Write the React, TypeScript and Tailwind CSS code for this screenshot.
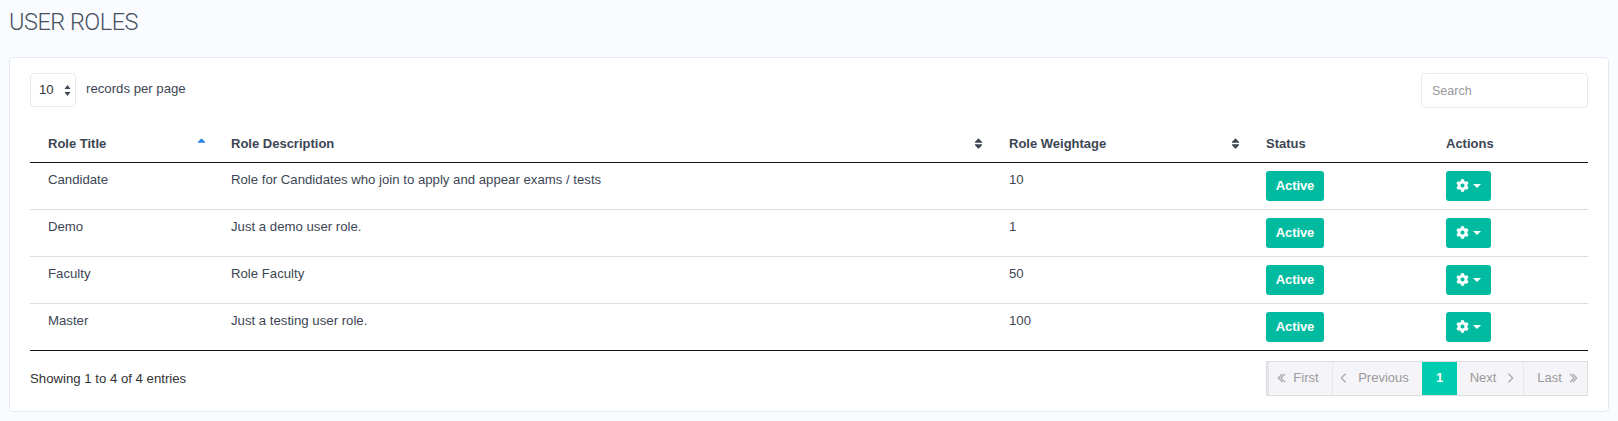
import { FaCog, FaSort, FaSortUp } from "react-icons/fa";
import { LiaAngleDoubleLeftSolid, LiaAngleDoubleRightSolid, LiaAngleLeftSolid, LiaAngleRightSolid } from "react-icons/lia";

const roles = [
    { title: "Candidate", description: "Role for Candidates who join to apply and appear exams / tests", weightage: "10" },
    { title: "Demo", description: "Just a demo user role.", weightage: "1" },
    { title: "Faculty", description: "Role Faculty", weightage: "50" },
    { title: "Master", description: "Just a testing user role.", weightage: "100" },
];

function Pager() {
    return (
        <div className="flex h-[35px] border border-[#dddddd] bg-[#f5f5f9] text-[13px] text-[#999999]">
            <span className="flex w-[66px] items-center justify-center gap-[5px] border-r border-l-2 border-r-[#e8e8ec] border-l-[#e4e4e8] pr-[6px]">
                <LiaAngleDoubleLeftSolid className="text-[12px]" strokeWidth={1} /> First
            </span>
            <span className="flex w-[89px] items-center justify-center gap-[8px] pr-[8px]">
                <LiaAngleLeftSolid className="text-[12px]" strokeWidth={1} /> Previous
            </span>
            <span className="flex w-[35px] items-center justify-center bg-[#00ccb0] font-bold text-white">1</span>
            <span className="flex w-[67px] items-center justify-center gap-[8px] border-r border-[#e8e8ec] pl-[6px]">
                Next <LiaAngleRightSolid className="text-[12px]" strokeWidth={1} />
            </span>
            <span className="flex w-[63px] items-center justify-center gap-[5px] pl-[5px]">
                Last <LiaAngleDoubleRightSolid className="text-[12px]" strokeWidth={1} />
            </span>
        </div>
    );
}

export default function App() {
    return (
        <div className="h-[421px] overflow-hidden bg-[#f9fbfe] px-[9px] pt-[9px] font-['Liberation_Sans',sans-serif] text-[13.2px] text-[#3d4654]">
            <h1 className="h-[48px] font-['Roboto',sans-serif] text-[23.5px] leading-[26px] font-light tracking-[-0.5px] text-[#47505e]">
                USER ROLES
            </h1>

            <div className="h-[355px] w-[1600px] rounded-[4px] border border-[#e3e9f3] bg-white px-[20px] pt-[15px]">
                <div className="flex items-start justify-between">
                    <div className="flex items-start">
                        <div className="relative h-[34px] w-[46px]">
                            <select className="h-full w-full appearance-none rounded-[4px] border border-[#e3e9f3] bg-white pl-[8px] text-[13.2px] text-[#333333] outline-none">
                                <option>10</option>
                            </select>
                            <svg className="absolute top-[12px] left-[34px]" width="7" height="11" viewBox="0 0 7 11">
                                <path d="M3.5 0 6.5 4H.5ZM.5 7h6l-3 4Z" fill="#3d4654" />
                            </svg>
                        </div>
                        <span className="ml-[10px] pt-[7px] leading-[18px]">records per page</span>
                    </div>
                    <input
                        className="h-[35px] w-[167px] rounded-[4px] border border-[#e3e9f3] px-[10px] pt-[1px] text-[12.5px] outline-none placeholder:text-[#999999]"
                        placeholder="Search"
                    />
                </div>

                <table className="mt-[18px] w-[1558px] table-fixed border-collapse">
                    <thead>
                        <tr className="h-[36px] border-b border-[#111111] text-left text-[13px] font-bold">
                            <th className="w-[183px] pl-[18px] align-middle">
                                <div className="flex items-center justify-between pr-[5px]">
                                    Role Title
                                    <FaSortUp className="text-[#2b85e4]" />
                                </div>
                            </th>
                            <th className="w-[778px] pl-[18px] align-middle">
                                <div className="flex items-center justify-between pr-[6px]">
                                    Role Description
                                    <FaSort className="text-[#3d4654]" />
                                </div>
                            </th>
                            <th className="w-[257px] pl-[18px] align-middle">
                                <div className="flex items-center justify-between pr-[6px]">
                                    Role Weightage
                                    <FaSort className="text-[#3d4654]" />
                                </div>
                            </th>
                            <th className="w-[180px] pl-[18px] align-middle">Status</th>
                            <th className="pl-[18px] align-middle">Actions</th>
                        </tr>
                    </thead>
                    <tbody>
                        {roles.map((role, i) => (
                            <tr
                                key={role.title}
                                className={
                                    i === roles.length - 1
                                        ? "h-[47px] border-b border-[#111111]"
                                        : "h-[47px] border-b border-[#dddddd]"
                                }
                            >
                                <td className="pt-[8px] pl-[18px] align-top leading-[18px]">{role.title}</td>
                                <td className="pt-[8px] pl-[18px] align-top leading-[18px]">{role.description}</td>
                                <td className="pt-[8px] pl-[18px] align-top leading-[18px]">{role.weightage}</td>
                                <td className="pt-[8px] pl-[18px] align-top">
                                    <span className="flex h-[30px] w-[58px] items-center justify-center rounded-[3px] bg-[#00bba0] text-[13px] font-bold tracking-[-0.1px] text-white">
                                        Active
                                    </span>
                                </td>
                                <td className="pt-[8px] pl-[18px] align-top">
                                    <span className="flex h-[30px] w-[45px] items-center justify-center gap-[4px] rounded-[3px] bg-[#00bba0] text-white">
                                        <FaCog className="text-[13px]" />
                                        <svg width="8" height="4" viewBox="0 0 8 4">
                                            <path d="M0 0h8L4 4Z" fill="#ffffff" />
                                        </svg>
                                    </span>
                                </td>
                            </tr>
                        ))}
                    </tbody>
                </table>

                <div className="mt-[10px] flex items-start justify-between">
                    <span className="pt-[9px] leading-[18px] text-[#333333]">Showing 1 to 4 of 4 entries</span>
                    <Pager />
                </div>
            </div>
        </div>
    );
}
